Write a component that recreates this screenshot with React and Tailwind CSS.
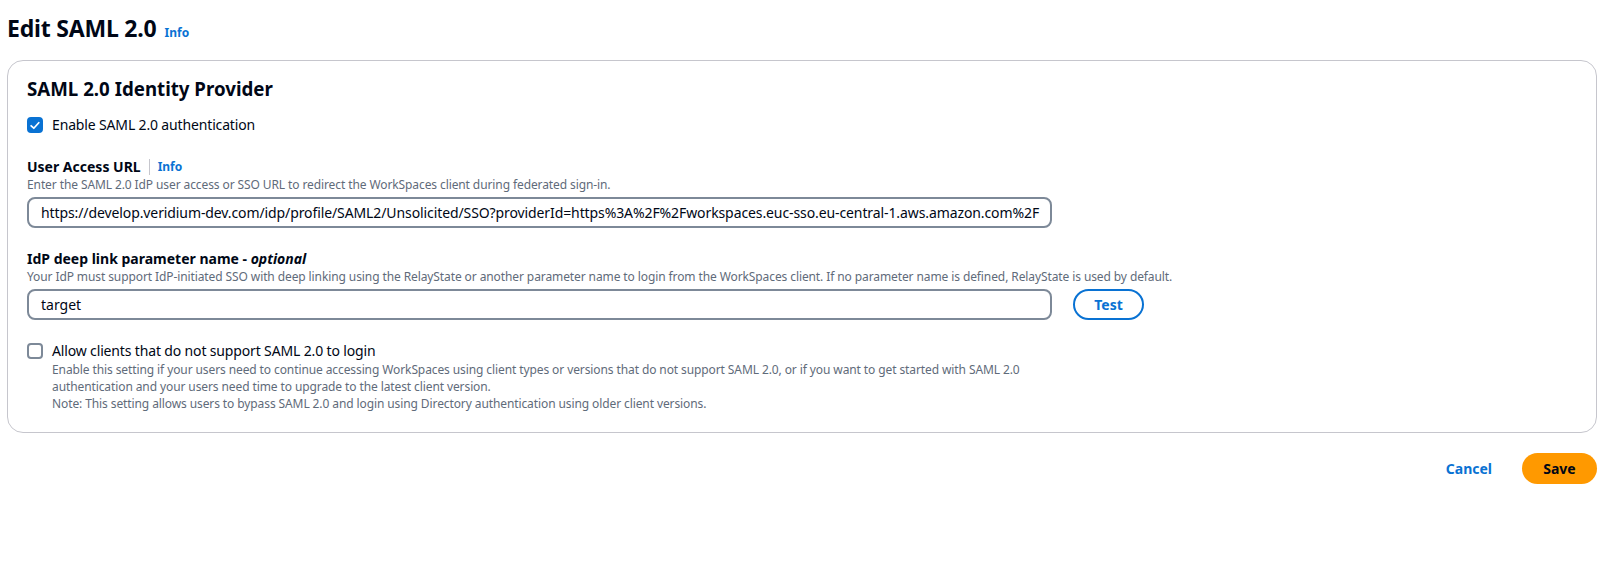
import React, { useState } from "react";

const font = { fontFamily: '"Noto Sans", "Open Sans", Arial, sans-serif' };

const Info = ({ className = "" }) => (
  <a href="#" className={`text-[12px] font-bold text-[#0972d3] ${className}`}>
    Info
  </a>
);

const Checkbox = ({ checked, onChange }) => (
  <button
    onClick={onChange}
    className={`w-[16px] h-[16px] rounded-[4px] flex items-center justify-center shrink-0 ${
      checked ? "bg-[#0972d3] border-2 border-[#0972d3]" : "border-2 border-[#7d8998] bg-white"
    }`}
  >
    {checked && (
      <svg viewBox="0 0 14 14" className="w-[13px] h-[13px]">
        <path d="M2.5 7.3 5.6 10.2 11.4 3.8" fill="none" stroke="white" strokeWidth="2" strokeLinecap="round" strokeLinejoin="round" />
      </svg>
    )}
  </button>
);

export default function App() {
  const [samlOn, setSamlOn] = useState(true);
  const [allowOld, setAllowOld] = useState(false);

  return (
    <div className="bg-white text-[#000716] pl-[7px] pr-[5px] pb-[80px]" style={font}>
      {/* Header */}
      <div className="flex items-baseline gap-2 pt-[13px]">
        <h1 className="text-[23px] font-bold tracking-[-0.2px] leading-[30px]">Edit SAML 2.0</h1>
        <Info />
      </div>

      {/* Card */}
      <div className="mt-[17px] border border-[#c6c6cd] rounded-[16px] pl-[19px] pr-5 pt-[14px] pb-[20px]">
        <h2 className="text-[18.7px] font-bold leading-[28px]">SAML 2.0 Identity Provider</h2>

        <label className="flex items-center gap-[9px] mt-[12px] text-[14px] leading-[20px] tracking-[-0.15px]">
          <Checkbox checked={samlOn} onChange={() => setSamlOn(!samlOn)} />
          Enable SAML 2.0 authentication
        </label>

        {/* User Access URL */}
        <div className="mt-[22px]">
          <div className="flex items-center text-[14px] leading-[20px]">
            <span className="font-bold">User Access URL</span>
            <span className="mx-2 h-[16px] w-px bg-[#c6c6cd]" />
            <Info />
          </div>
          <p className="text-[12px] leading-[16px] text-[#5f6b7a] tracking-[-0.1px]">
            Enter the SAML 2.0 IdP user access or SSO URL to redirect the WorkSpaces client during federated sign-in.
          </p>
          <div className="mt-[4px] w-[1025px] h-[31px] border-2 border-[#7d8998] rounded-[8px] flex items-center px-[12px] text-[14px] overflow-hidden whitespace-nowrap tracking-[-0.1px]">
            https://develop.veridium-dev.com/idp/profile/SAML2/Unsolicited/SSO?providerId=https%3A%2F%2Fworkspaces.euc-sso.eu-central-1.aws.amazon.com%2F
          </div>
        </div>

        {/* Deep link */}
        <div className="mt-[21px]">
          <div className="text-[14px] leading-[20px] font-bold">
            IdP deep link parameter name - <i>optional</i>
          </div>
          <p className="text-[12px] leading-[16px] text-[#5f6b7a] tracking-[-0.1px]">
            Your IdP must support IdP-initiated SSO with deep linking using the RelayState or another parameter name to login from the WorkSpaces client. If no parameter name is defined, RelayState is used by default.
          </p>
          <div className="mt-[4px] flex items-center gap-[21px]">
            <div className="w-[1025px] h-[31px] border-2 border-[#7d8998] rounded-[8px] flex items-center px-[12px] text-[14px]">
              target
            </div>
            <button className="w-[71px] h-[31px] border-2 border-[#0972d3] rounded-full text-[14px] font-bold text-[#0972d3]">
              Test
            </button>
          </div>
        </div>

        {/* Allow old clients */}
        <div className="mt-[21px] flex gap-[9px]">
          <div className="pt-[2px]">
            <Checkbox checked={allowOld} onChange={() => setAllowOld(!allowOld)} />
          </div>
          <div>
            <div className="text-[14px] leading-[20px] tracking-[-0.15px]">Allow clients that do not support SAML 2.0 to login</div>
            <p className="text-[12px] leading-[17px] text-[#5f6b7a] tracking-[-0.1px] max-w-[980px]">
              Enable this setting if your users need to continue accessing WorkSpaces using client types or versions that do not support SAML 2.0, or if you want to get started with SAML 2.0 authentication and your users need time to upgrade to the latest client version.
            </p>
            <p className="text-[12px] leading-[17px] text-[#5f6b7a] tracking-[-0.1px]">
              Note: This setting allows users to bypass SAML 2.0 and login using Directory authentication using older client versions.
            </p>
          </div>
        </div>
      </div>

      {/* Actions */}
      <div className="flex justify-end items-center gap-[30px] mt-[20px]">
        <button className="text-[14px] font-bold text-[#0972d3]">Cancel</button>
        <button className="w-[75px] h-[31px] rounded-full bg-[#ff9900] text-[14px] font-bold text-[#000716]">
          Save
        </button>
      </div>
    </div>
  );
}
